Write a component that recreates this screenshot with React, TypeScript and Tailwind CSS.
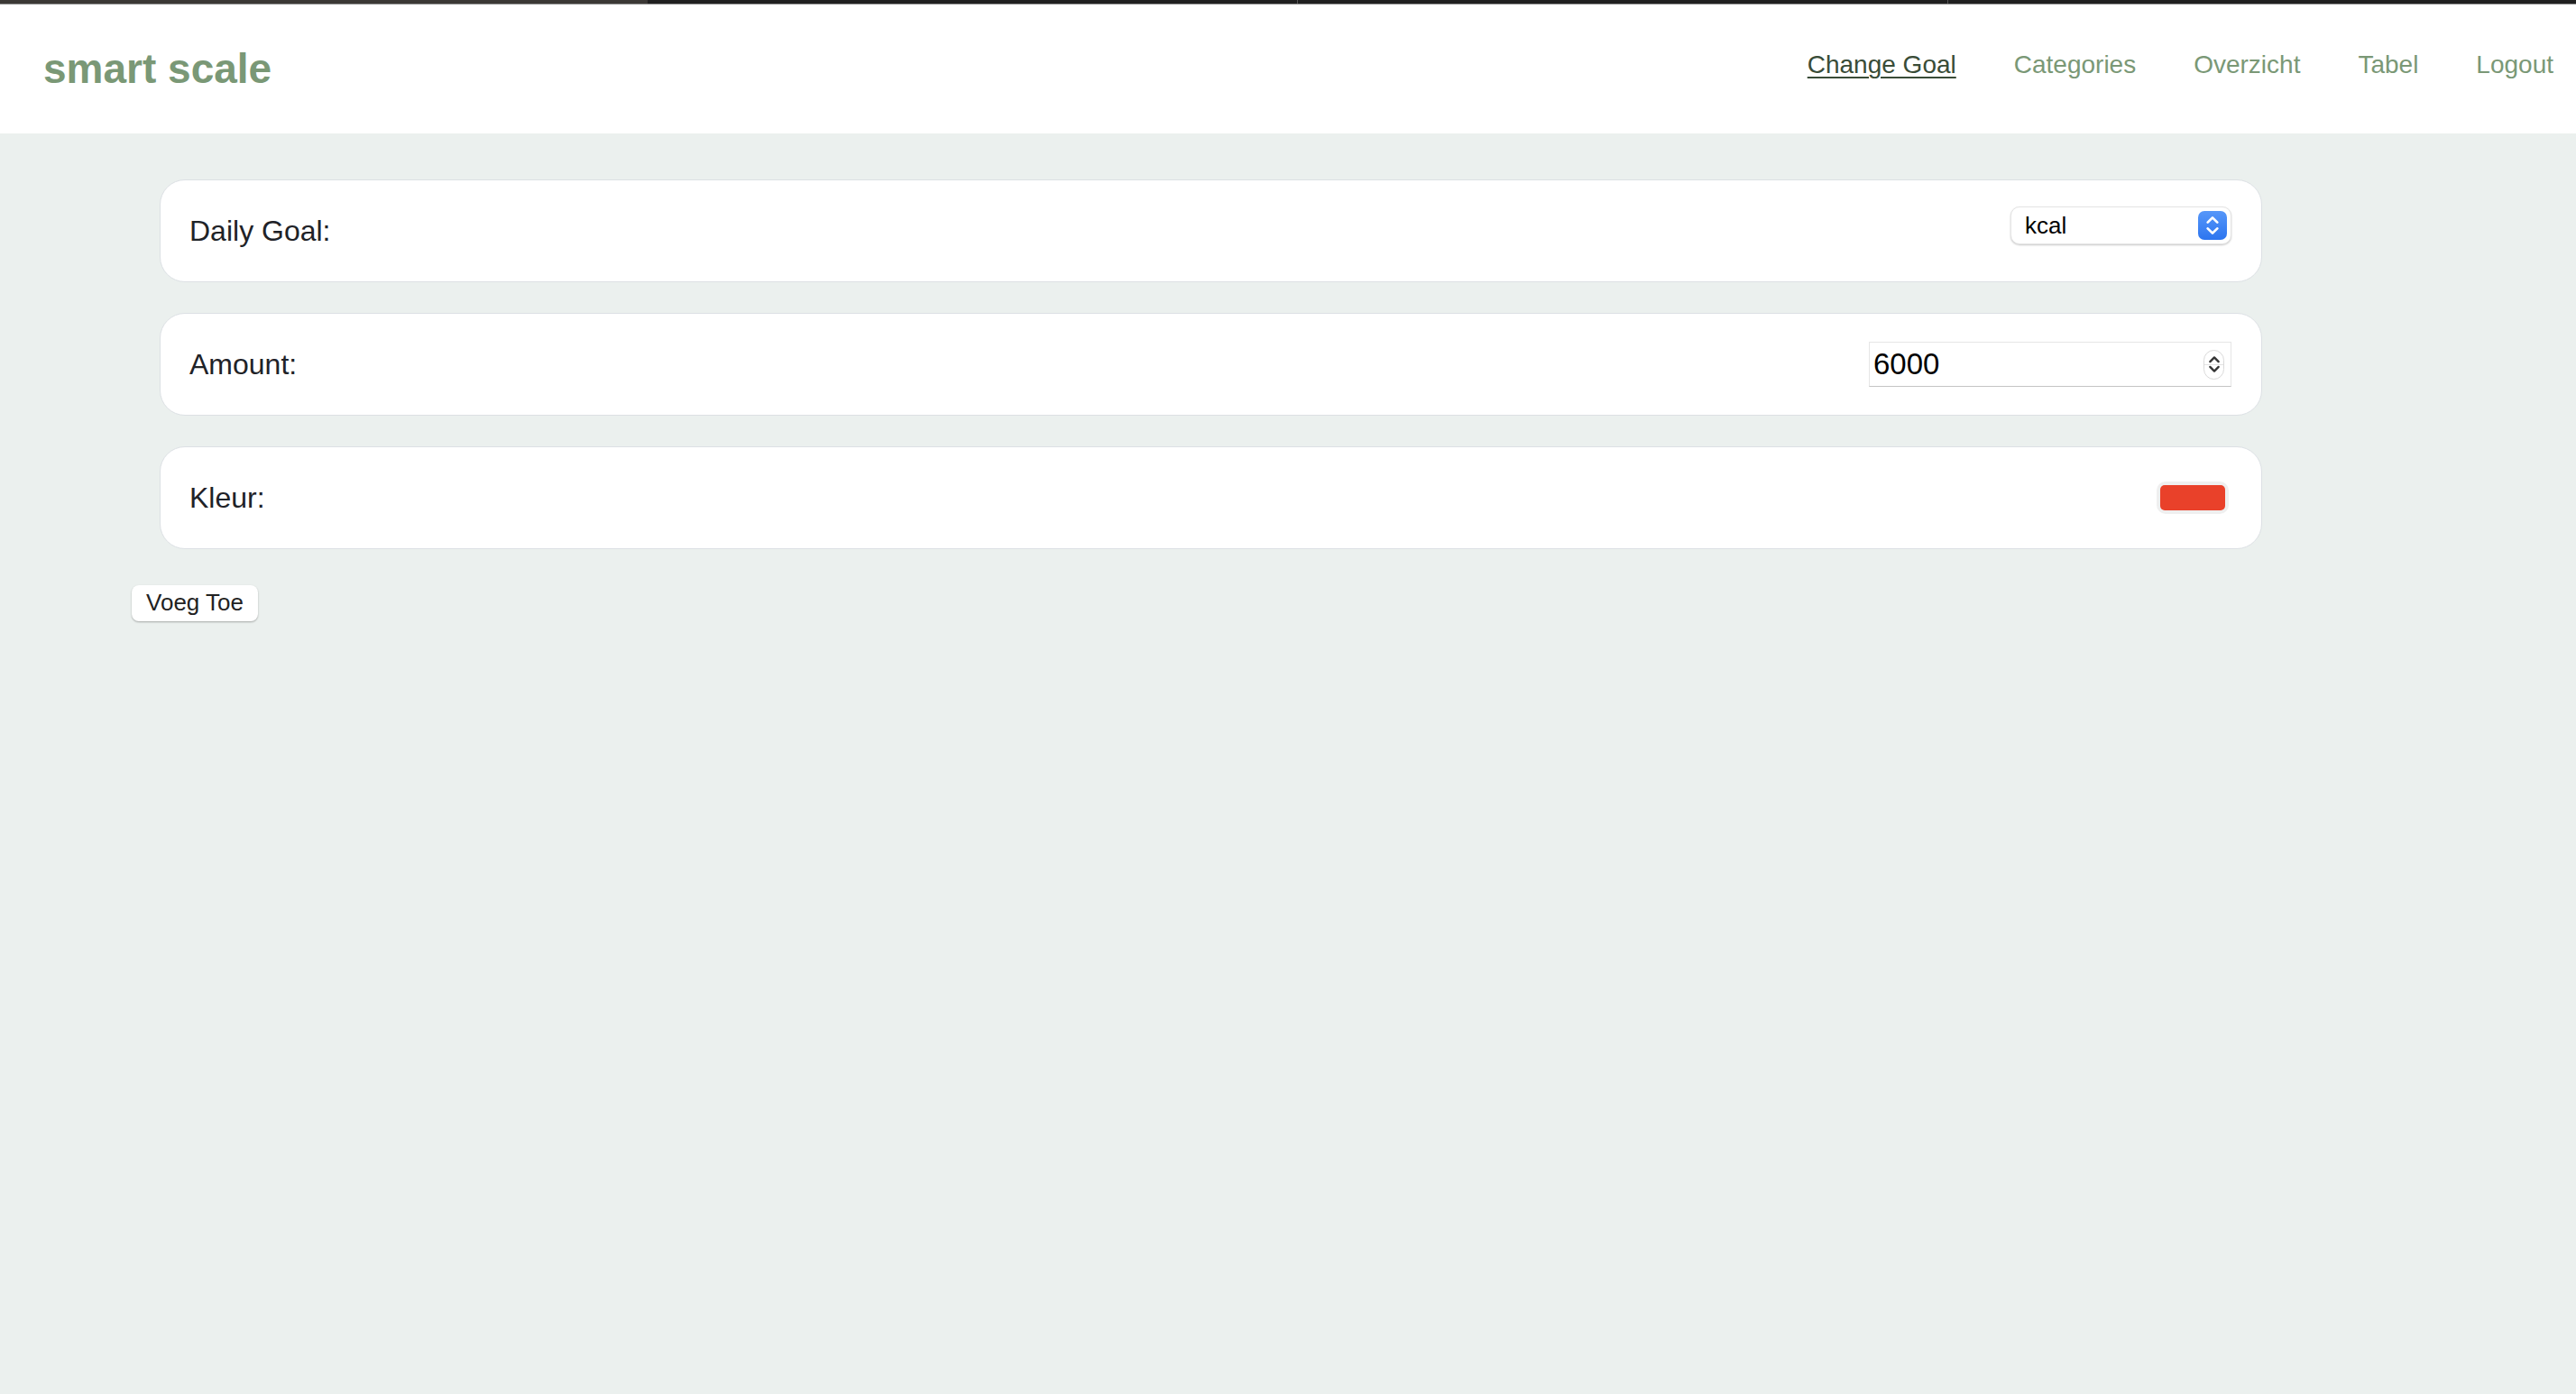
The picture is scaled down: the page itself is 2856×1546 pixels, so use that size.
import React from "react";

const links = [
  { label: "Change Goal", active: true },
  { label: "Categories", active: false },
  { label: "Overzicht", active: false },
  { label: "Tabel", active: false },
  { label: "Logout", active: false },
];

function Chevrons({ color, w, h }: { color: string; w: number; h: number }) {
  return (
    <svg width={w} height={h} viewBox="0 0 12 18" fill="none">
      <path d="M2 6.5 L6 2.5 L10 6.5" stroke={color} strokeWidth="2" strokeLinecap="round" strokeLinejoin="round" />
      <path d="M2 11.5 L6 15.5 L10 11.5" stroke={color} strokeWidth="2" strokeLinecap="round" strokeLinejoin="round" />
    </svg>
  );
}

function Card({ label, children }: { label: string; children: React.ReactNode }) {
  return (
    <div className="flex h-[114px] w-[2331px] items-center justify-between rounded-[28px] border border-[#dce0e4] bg-white pl-[32px] pr-[33px]">
      <span className="text-[32px] text-[#1f2328]">{label}</span>
      {children}
    </div>
  );
}

export default function App() {
  return (
    <div className="min-h-screen bg-[#ebf0ee]" style={{ fontFamily: '"Liberation Sans", Arial, sans-serif' }}>
      {/* browser tab strip */}
      <div className="flex h-[5px] border-b border-[#8d8d8d]">
        <div className="w-[718px] bg-[#3b3835]" />
        <div className="w-[721px] border-r border-[#555] bg-[#1f1f1f]" />
        <div className="w-[721px] border-r border-[#555] bg-[#1f1f1f]" />
        <div className="flex-1 bg-[#1f1f1f]" />
      </div>

      <header className="flex h-[143px] items-center justify-between bg-white pl-[48px] pr-[25px]">
        <h1 className="text-[46px] font-bold text-[#7a9876]">smart scale</h1>
        <nav className="-mt-[9px] flex gap-[64px]">
          {links.map((l) => (
            <a
              key={l.label}
              href="#"
              className={
                l.active
                  ? "text-[28px] text-[#394c37] underline decoration-2 underline-offset-[4px]"
                  : "text-[28px] text-[#7a9876]"
              }
            >
              {l.label}
            </a>
          ))}
        </nav>
      </header>

      <main className="pl-[146px] pt-[51px]">
        <div className="ml-[31px] flex flex-col gap-[34px]">
          <Card label="Daily Goal:">
            <div className="mb-[12px] flex h-[42px] w-[245px] items-center justify-between rounded-[10px] border border-[#e4e4e4] bg-white pl-[15px] pr-[4px] shadow-[0_1px_2px_rgba(0,0,0,0.22)]">
              <span className="text-[26px] text-black">kcal</span>
              <span className="flex h-[32px] w-[32px] items-center justify-center rounded-[7px] bg-gradient-to-b from-[#5697f9] to-[#2d75ef]">
                <Chevrons color="#ffffff" w={16} h={24} />
              </span>
            </div>
          </Card>

          <Card label="Amount:">
            <div className="flex h-[50px] w-[402px] items-center justify-between border border-[#e6e6e6] border-b-[#c4c4c4] bg-white pl-[4px] pr-[7px]">
              <span className="text-[33px] text-black">6000</span>
              <span className="relative flex h-[33px] w-[23px] items-center justify-center rounded-full border border-[#dadada] bg-white">
                <span className="absolute left-0 right-0 top-1/2 h-px bg-[#e2e2e2]" />
                <Chevrons color="#333333" w={14} h={24} />
              </span>
            </div>
          </Card>

          <Card label="Kleur:">
            <div className="mr-[3px] flex h-[36px] w-[80px] rounded-[10px] bg-[#efefef] p-[4px]">
              <div className="flex-1 rounded-[5px] bg-[#e9412a]" />
            </div>
          </Card>
        </div>

        <button className="mt-[40px] flex h-[40px] w-[140px] items-center justify-center rounded-[8px] bg-white pb-[2px] text-[26px] text-[#222] shadow-[0_1px_2px_rgba(0,0,0,0.3)]">
          Voeg Toe
        </button>
      </main>
    </div>
  );
}
